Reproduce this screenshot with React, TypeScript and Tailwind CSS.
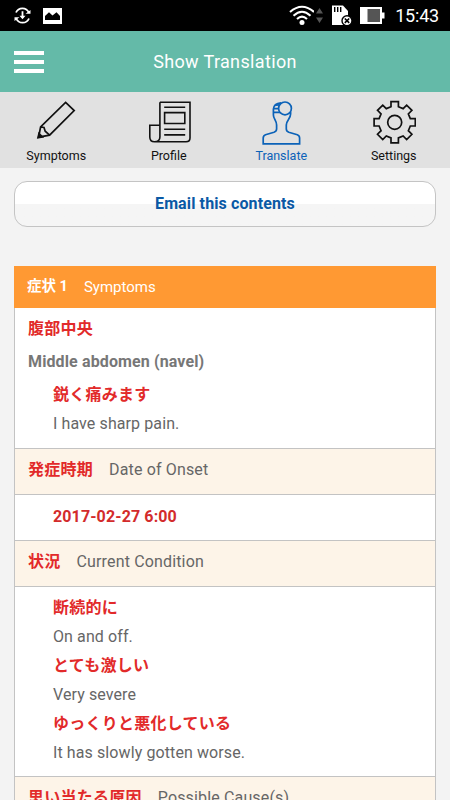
import React from 'react';

type Entry = { ja: string; en?: string };

const conditions: Entry[] = [
  { ja: '断続的に', en: 'On and off.' },
  { ja: 'とても激しい', en: 'Very severe' },
  { ja: 'ゆっくりと悪化している', en: 'It has slowly gotten worse.' },
];

const gearPoints = Array.from({ length: 8 }, (_, i) => {
  const a = (i * Math.PI) / 4;
  return [[-3.7, -15.6], [-3.7, -20.6], [3.7, -20.6], [3.7, -15.6]]
    .map(([x, y]) => `${22.7 + x * Math.cos(a) - y * Math.sin(a)},${22.3 + x * Math.sin(a) + y * Math.cos(a)}`)
    .join(' ');
}).join(' ');

const PencilIcon = () => (
  <svg width="44" height="46" viewBox="0 0 44 46" fill="none" stroke="currentColor" strokeWidth="1.7">
    <path d="M31.6 2.4 40.2 10.6 15.6 35.2 4.6 37.2 6.6 27ZM6.6 27 10 27.5 11.2 31.2 15.6 35.2" />
    <path d="M5 33.5 8.5 37 4 37.8Z" fill="currentColor" />
  </svg>
);

const ProfileIcon = () => (
  <svg width="44" height="46" viewBox="0 0 44 46" fill="none" stroke="currentColor" strokeWidth="1.6">
    <path d="M12.9 2.3H43V38Q43 41.7 39 41.7H7.5Q2.8 41.7 2.8 37V25.2H12.9M12.9 2.3V37Q12.9 41.7 7.5 41.7" />
    <path d="M17.2 7.2H38.2M17.2 29.3H38.2M17.2 34.9H38.2" />
    <path d="M17.6 12.6H37.8V23.5H17.6Z" />
  </svg>
);

const DoctorIcon = () => (
  <svg width="44" height="46" viewBox="0 0 44 46" fill="none" stroke="currentColor" strokeWidth="1.7">
    <circle cx="26" cy="8.4" r="6.4" />
    <path d="M22 2.8C17.5 3.2 14.7 5 14.4 9V15C14.4 19 17.6 20.5 17.6 25V29Q17.6 31.2 15 32.2L6.5 34.7Q4.2 35.6 4.2 38V43.9H40.6V38Q40.6 35.6 38.3 34.7L29.8 32.2Q27.3 31.2 27.3 29V25C27.3 20.5 31.6 19 31.6 14V11.7" />
    <path d="M16.5 5.2 20.5 4.8M14.4 8.6H19.6M14.6 12.4H21" />
  </svg>
);

const GearIcon = () => (
  <svg width="44" height="46" viewBox="0 0 44 46" fill="none" stroke="currentColor" strokeWidth="1.7">
    <polygon points={gearPoints} />
    <circle cx="22.7" cy="22.3" r="7" />
  </svg>
);

const tabs = [
  { label: 'Symptoms', Icon: PencilIcon },
  { label: 'Profile', Icon: ProfileIcon },
  { label: 'Translate', Icon: DoctorIcon, active: true },
  { label: 'Settings', Icon: GearIcon },
];

const StatusBar = () => (
  <div className="flex h-[31px] items-center justify-between bg-black pr-[11px] pl-[14px] text-white">
    <div className="flex items-center gap-[12px]">
      <svg width="17" height="17" viewBox="0 0 17 17" fill="none" stroke="currentColor" strokeWidth="1.8">
        <path d="M2 5.5A7 7 0 0 1 14.8 5.5M15 11.5A7 7 0 0 1 2.2 11.5M8.5 4.2V11" />
        <path d="M11.5 6.8H16.5V3ZM5.5 10.2H.5V14ZM5.5 8.7H11.5L8.5 12.2Z" fill="currentColor" stroke="none" />
      </svg>
      <svg width="19" height="16" viewBox="0 0 19 16">
        <rect width="19" height="16" fill="#fff" />
        <path d="M2 12V8L6 4.2 9.5 7.5 13.5 4.2 17 8V12Z" fill="#000" />
      </svg>
    </div>
    <div className="flex items-center">
      <svg width="25" height="21" viewBox="0 0 25 21" fill="none" stroke="currentColor" strokeWidth="2.1">
        <path d="M1 7Q13 -3.5 25 7M4.5 10.7Q13 2.8 21.5 10.7M8 14Q13 9.4 18 14" />
        <circle cx="13" cy="17.6" r="2.5" fill="currentColor" stroke="none" />
      </svg>
      <svg className="ml-[2px]" width="7" height="18" viewBox="0 0 7 18" fill="#555">
        <path d="M0 6.5H7L3.5 1ZM0 10.5H7L3.5 16Z" />
      </svg>
      <svg className="ml-[8px]" width="22" height="21" viewBox="0 0 22 21">
        <path d="M1 .5H12L17 6V20H1Z" fill="#fff" />
        <path d="M3.7 2V7M6.7 2V7M9.7 2V7" stroke="#000" strokeWidth="1.4" />
        <circle cx="16" cy="15.7" r="5" fill="#fff" stroke="#000" strokeWidth="1.4" />
        <path d="M13.8 13.5 18.2 17.9M18.2 13.5 13.8 17.9" stroke="#000" strokeWidth="1.6" />
      </svg>
      <svg className="ml-[7px]" width="25" height="17" viewBox="0 0 25 17">
        <path d="M0 0H22V5.5H24.5V11.5H22V17H0Z" fill="#fff" />
        <path d="M7.5 2H20V15H7.5Z" fill="#555" />
      </svg>
      <span className="ml-[10px] text-[18px] leading-[21px] tracking-[-0.2px]">15:43</span>
    </div>
  </div>
);

const SectionTitle = ({ ja, en }: Entry) => (
  <div className="flex h-[46px] items-center border-b border-[#c3c3c3] bg-[#fdf4e8] pb-[3px] pl-[13px]">
    <span className="text-[16px] font-bold tracking-[0.25px] text-[#e22a2a]">{ja}</span>
    <span className="ml-[16px] text-[16px] tracking-[0.15px] text-[#666]">{en}</span>
  </div>
);

const EntryRows = ({ ja, en }: Entry) => (
  <>
    <p className="pl-[25px] font-bold tracking-[0.25px] text-[#e22a2a]">{ja}</p>
    <p className="pl-[25px] tracking-[0.1px]">{en}</p>
  </>
);

export default function App() {
  return (
    <div className="h-[800px] w-[450px] overflow-hidden bg-[#f3f3f3] font-[Roboto,'Noto_Sans_CJK_JP',sans-serif]">
      <StatusBar />
      <header className="flex h-[61px] items-center bg-[#64baa8] px-[14px] text-white">
        <button className="flex w-[30px] flex-col gap-[5px]" aria-label="Menu">
          <span className="h-[4px] w-full bg-white" />
          <span className="h-[4px] w-full bg-white" />
          <span className="h-[4px] w-full bg-white" />
        </button>
        <h1 className="flex-1 pr-[30px] text-center text-[18px] tracking-[0.35px]">Show Translation</h1>
      </header>
      <nav className="grid h-[76px] grid-cols-4 bg-[#e1e1e1] pt-[8px]">
        {tabs.map(({ label, Icon, active }) => (
          <a key={label} className={`flex flex-col items-center ${active ? 'text-[#0b62b8]' : 'text-[#111]'}`}>
            <Icon />
            <span className="mt-px text-[12.5px] leading-[18px]">{label}</span>
          </a>
        ))}
      </nav>

      <main className="px-[14px] pt-[13px]">
        <button className="block h-[46px] w-full rounded-[13px] border border-[#c4c4c4] bg-linear-to-b from-white from-50% to-[#f5f5f5] to-50% text-[16px] font-bold tracking-[0.12px] text-[#0a59a5]">
          Email this contents
        </button>

        <section className="mt-[39px]">
          <h2 className="flex h-[42px] items-center bg-[#ff9933] pl-[13px] text-white">
            <span className="text-[14.5px] font-bold">症状 1</span>
            <span className="ml-[16px] text-[15px]">Symptoms</span>
          </h2>
          <div className="border-x border-[#c3c3c3] bg-white text-[16px] text-[#666]">
            <div className="h-[141px] border-b border-[#c3c3c3] pt-[6px] pl-[13px] leading-[29px]">
              <p className="font-bold tracking-[0.25px] text-[#e22a2a]">腹部中央</p>
              <p className="mt-[4px] mb-[4px] font-bold tracking-[0.12px] text-[#777]">Middle abdomen (navel)</p>
              <EntryRows ja="鋭く痛みます" en="I have sharp pain." />
            </div>
            <SectionTitle ja="発症時期" en="Date of Onset" />
            <div className="flex h-[46px] items-center border-b border-[#c3c3c3] pb-[2px] pl-[38px] font-bold tracking-[0.12px] text-[#d32b2b]">
              2017-02-27 6:00
            </div>
            <SectionTitle ja="状況" en="Current Condition" />
            <div className="h-[190px] border-b border-[#c3c3c3] pt-[6px] pl-[13px] leading-[29px]">
              {conditions.map((c) => (
                <EntryRows key={c.ja} {...c} />
              ))}
            </div>
            <SectionTitle ja="思い当たる原因" en="Possible Cause(s)" />
          </div>
        </section>
      </main>
    </div>
  );
}
